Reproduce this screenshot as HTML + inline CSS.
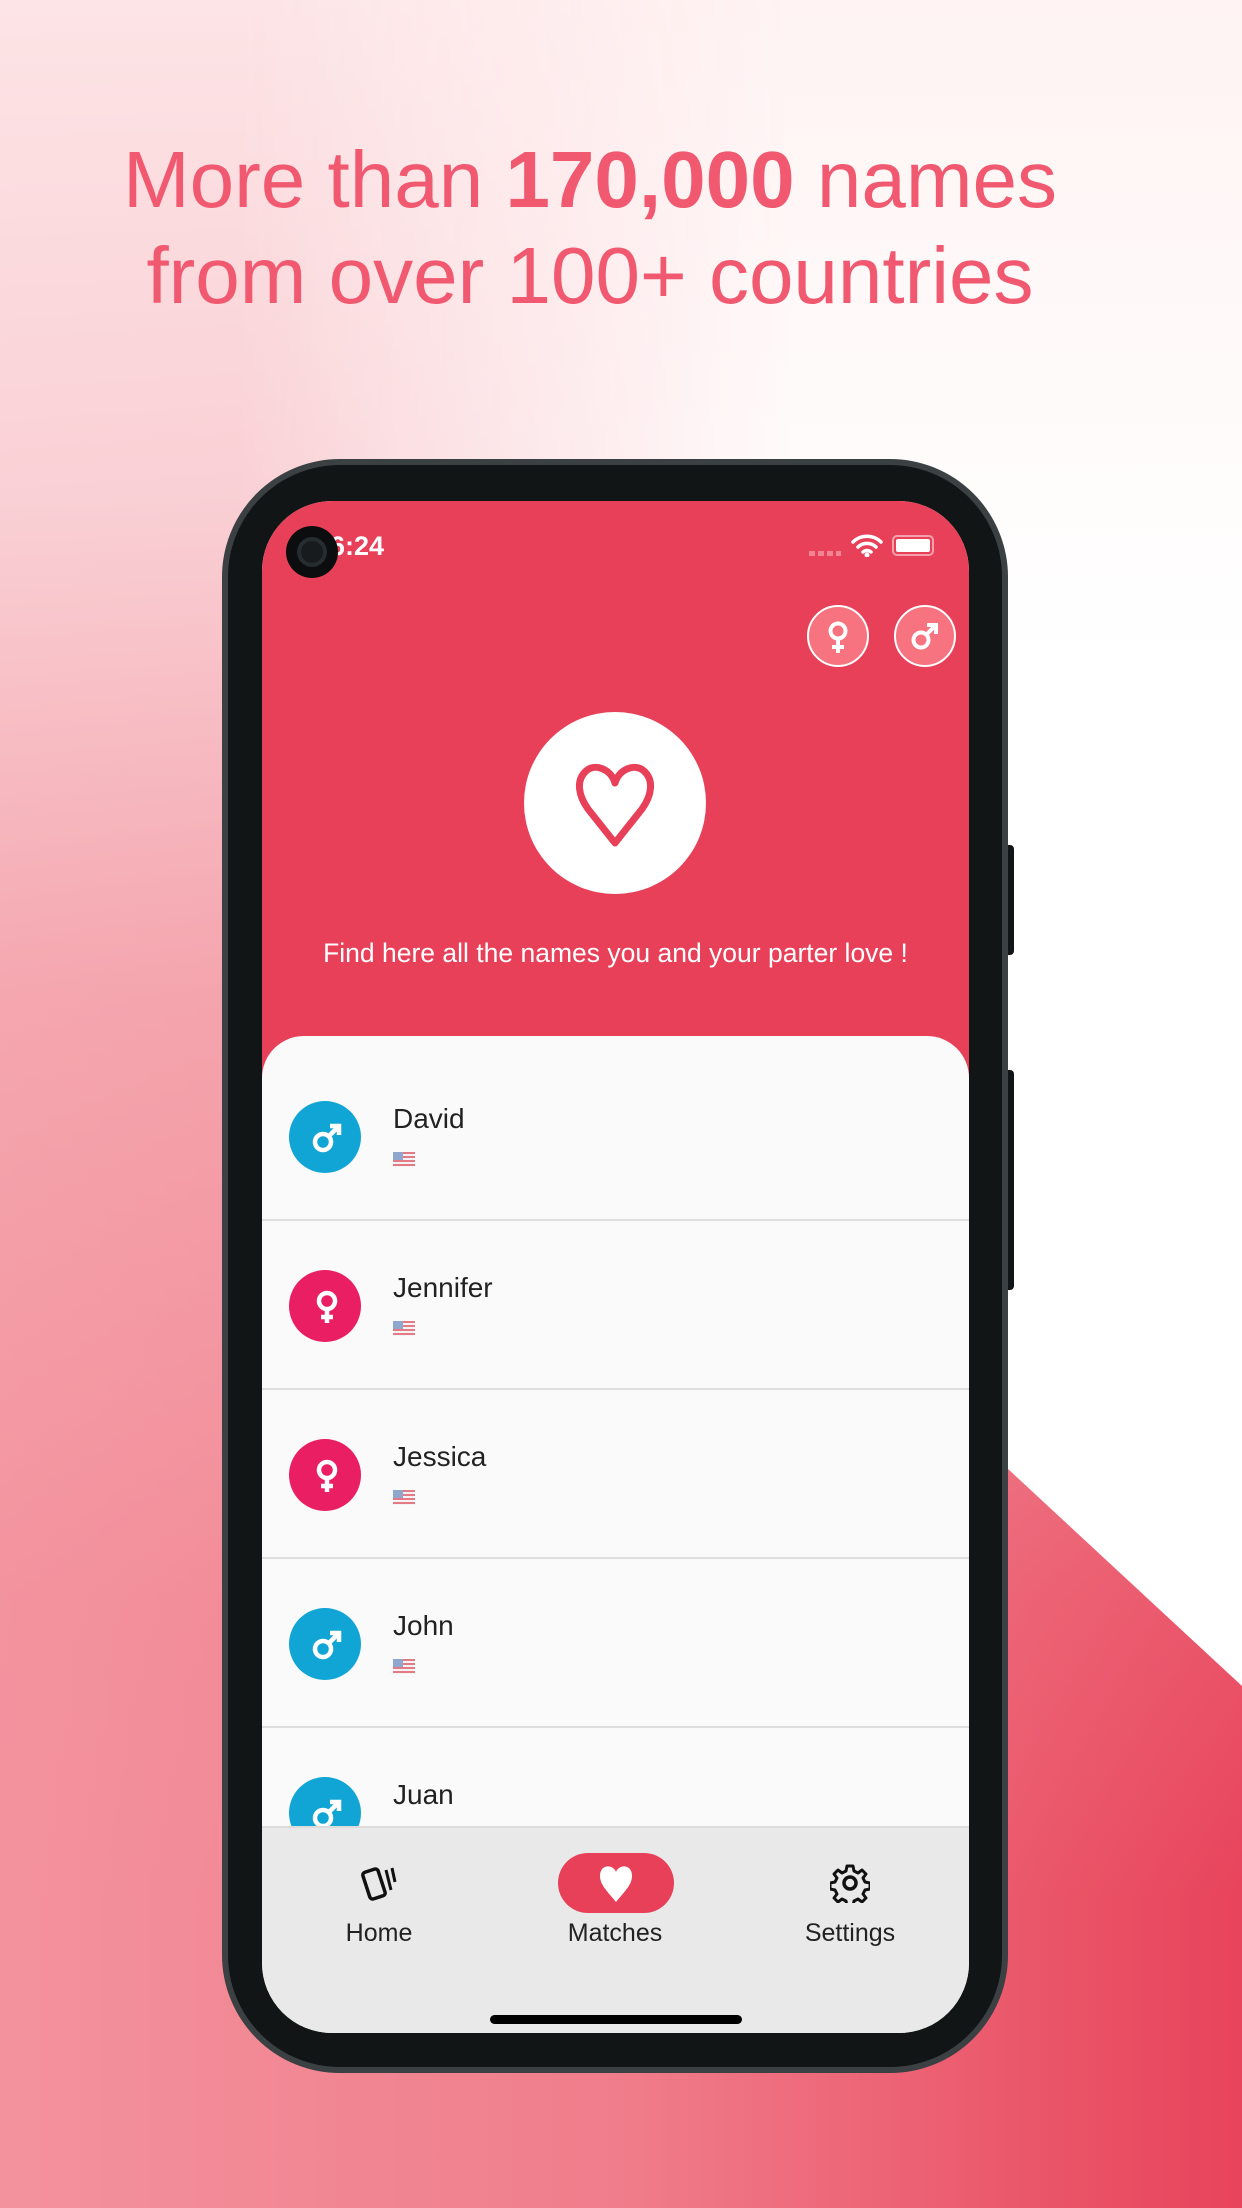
<!DOCTYPE html>
<html><head><meta charset="utf-8"><style>
*{margin:0;padding:0;box-sizing:border-box}
body{width:1242px;height:2208px;overflow:hidden;position:relative;font-family:"Liberation Sans",sans-serif;background:linear-gradient(90deg,#f3929d 0%,#f07d8b 50%,#ea5468 85%,#e8445c 100%)}
.lw{position:absolute;left:0;top:0;width:1242px;height:2208px;background:linear-gradient(180deg,#fde4e6 0px,rgba(250,215,219,.9) 500px,rgba(246,180,187,.6) 1000px,rgba(243,150,160,.2) 1600px,rgba(243,146,157,0) 1900px)}
.wa{position:absolute;left:0;top:0;width:1242px;height:2208px;clip-path:polygon(0 0,1242px 0,1242px 1686px,1008px 1469px,0 534px);background:linear-gradient(180deg,#fff3f3 0%,#fff 30%,#fff 100%);-webkit-mask-image:linear-gradient(90deg,transparent 0px,transparent 232px,rgba(0,0,0,.35) 400px,#000 800px);mask-image:linear-gradient(90deg,transparent 0px,transparent 232px,rgba(0,0,0,.35) 400px,#000 800px)}
h1{position:absolute;left:0;width:1180px;text-align:center;font-weight:normal;font-size:80px;color:#f0596f;line-height:96px;top:132px}
h1 b{font-weight:bold}
.phone{position:absolute;left:222px;top:459px;width:786px;height:1614px;border-radius:118px;background:#121516;border:6px solid #3b4043}
.btn{position:absolute;background:#121516;border-radius:0 4px 4px 0;width:8px;left:1006px}
.screen{position:absolute;left:262px;top:501px;width:707px;height:1532px;border-radius:70px;overflow:hidden;background:#fafafa}
.hdr{position:absolute;left:0;top:0;width:707px;height:580px;background:#e84058}
.sheet{position:absolute;left:0;top:535px;width:707px;height:800px;background:#fafafa;border-radius:42px 42px 0 0}
.row{position:absolute;left:0;width:707px;height:169px;border-bottom:2px solid #dedede}
.av{position:absolute;left:27px;width:72px;height:72px;border-radius:50%}
.nm{position:absolute;left:131px;font-size:28px;color:#222}
.fl{position:absolute;left:131px;width:22px;height:15px;background:repeating-linear-gradient(180deg,#e47a86 0 2px,#f3f3f3 2px 4px)}
.fl:before{content:"";position:absolute;left:0;top:0;width:10px;height:8px;background:#8fa6cf}
.nav{position:absolute;left:0;top:1325px;width:707px;height:207px;background:#e9e9e9;border-top:2px solid #dcdcdc}
.lbl{position:absolute;top:91px;font-size:25px;color:#222;width:200px;text-align:center}
</style></head><body>
<div class="lw"></div>
<div class="wa"></div>
<h1>More than <b>170,000</b> names<br>from over 100+ countries</h1>
<div class="btn" style="top:845px;height:110px"></div>
<div class="btn" style="top:1070px;height:220px"></div>
<div class="phone"></div>
<div class="screen">
 <div class="hdr">
  <div style="position:absolute;left:68px;top:30px;color:#fff;font-size:27px;font-weight:bold">6:24</div>
  <div style="position:absolute;left:547px;top:50px;width:32px;height:5px;background:repeating-linear-gradient(90deg,#f18593 0 6px,transparent 6px 9px)"></div>
  <svg style="position:absolute;left:589px;top:32px" width="32" height="24" viewBox="0 0 32 24"><path d="M2 9a20 20 0 0 1 28 0M7 14a13 13 0 0 1 18 0M12 19a6 6 0 0 1 8 0" stroke="#fff" stroke-width="3.5" fill="none" stroke-linecap="round"/><circle cx="16" cy="22" r="2.5" fill="#fff"/></svg>
  <div style="position:absolute;left:630px;top:34px;width:42px;height:21px;border:2px solid #f5a0aa;border-radius:5px;padding:2px"><div style="width:100%;height:100%;background:#fff;border-radius:2px"></div></div>
  <div style="position:absolute;left:545px;top:104px;width:62px;height:62px;border-radius:50%;background:#f7737f;border:2px solid #fff"></div>
  <svg style="position:absolute;left:560px;top:118px" width="32" height="36" viewBox="0 0 32 36"><circle cx="16" cy="12" r="7.5" stroke="#fff" stroke-width="4" fill="none"/><path d="M16 20v14M10 28h12" stroke="#fff" stroke-width="4"/></svg>
  <div style="position:absolute;left:632px;top:104px;width:62px;height:62px;border-radius:50%;background:#f7737f;border:2px solid #fff"></div>
  <svg style="position:absolute;left:646px;top:118px" width="34" height="34" viewBox="0 0 34 34"><circle cx="13" cy="21" r="7.5" stroke="#fff" stroke-width="4" fill="none"/><path d="M18.5 15.5L28 6M19 6h9v9" stroke="#fff" stroke-width="4" fill="none"/></svg>
  <div style="position:absolute;left:262px;top:211px;width:182px;height:182px;border-radius:50%;background:#fff"></div>
  <svg style="position:absolute;left:303px;top:254px" width="100" height="96" viewBox="0 0 100 96"><path d="M50 28C46 14 30 8 21 16c-10 9-8 24 2 38l27 34 27-34c10-14 12-29 2-38-9-8-25-2-29 12z" stroke="#e84058" stroke-width="7" fill="none" stroke-linejoin="round"/></svg>
  <div style="position:absolute;left:0;width:707px;text-align:center;top:437px;color:#fff;font-size:26.5px">Find here all the names you and your parter love !</div>
 </div>
 <div style="position:absolute;left:24px;top:25px;width:52px;height:52px;border-radius:50%;background:#0b0d0e"></div>
 <div style="position:absolute;left:35px;top:36px;width:30px;height:30px;border-radius:50%;background:#181b1d;border:4px solid #272c2f"></div>
 <div class="sheet">
  <div class="row" style="top:0;height:185px"><div class="av" style="top:65px;background:#10a5d5"></div><div class="nm" style="top:67px">David</div><div class="fl" style="top:116px"></div></div>
  <div class="row" style="top:185px"><div class="av" style="top:49px;background:#e91e63"></div><div class="nm" style="top:51px">Jennifer</div><div class="fl" style="top:100px"></div></div>
  <div class="row" style="top:354px"><div class="av" style="top:49px;background:#e91e63"></div><div class="nm" style="top:51px">Jessica</div><div class="fl" style="top:100px"></div></div>
  <div class="row" style="top:523px"><div class="av" style="top:49px;background:#10a5d5"></div><div class="nm" style="top:51px">John</div><div class="fl" style="top:100px"></div></div>
  <div class="row" style="top:692px"><div class="av" style="top:49px;background:#10a5d5"></div><div class="nm" style="top:51px">Juan</div></div>
 </div>
 <svg style="position:absolute;left:0;top:0" width="707" height="1400">
  <defs><g id="m"><circle cx="-4" cy="5" r="8" stroke="#fff" stroke-width="4.5" fill="none"/><path d="M2 -1L11 -10M3 -11h9v9" stroke="#fff" stroke-width="4.5" fill="none"/></g>
  <g id="f"><circle cx="0" cy="-5" r="8" stroke="#fff" stroke-width="4.5" fill="none"/><path d="M0 3v14M-6 11h12" stroke="#fff" stroke-width="4.5"/></g></defs>
  <use href="#m" x="65" y="636"/><use href="#f" x="65" y="805"/><use href="#f" x="65" y="974"/><use href="#m" x="65" y="1143"/><use href="#m" x="65" y="1312"/>
 </svg>
 <div class="nav">
  <svg style="position:absolute;left:98px;top:36px" width="42" height="42" viewBox="0 0 42 42"><rect x="6" y="6" width="16" height="28" rx="3" transform="rotate(-18 14 20)" stroke="#111" stroke-width="3.5" fill="none"/><path d="M26 6l5 20M32 4l3 14" stroke="#111" stroke-width="3" fill="none"/></svg>
  <div class="lbl" style="left:17px">Home</div>
  <div style="position:absolute;left:296px;top:25px;width:116px;height:60px;border-radius:30px;background:#e84058"></div>
  <svg style="position:absolute;left:336px;top:36px" width="36" height="38" viewBox="0 0 36 38"><path d="M18 8C15 0 2 0 2 12c0 9 8 16 16 26 8-10 16-17 16-26C34 0 21 0 18 8z" fill="#fff"/></svg>
  <div class="lbl" style="left:253px">Matches</div>
  <svg style="position:absolute;left:568px;top:35px" width="40" height="40" viewBox="0 0 40 40"><circle cx="20" cy="20" r="6" stroke="#111" stroke-width="3.5" fill="none"/><path d="M17 3h6l1 5 4 2 4-3 4 4-3 4 2 4 5 1v6l-5 1-2 4 3 4-4 4-4-3-4 2-1 5h-6l-1-5-4-2-4 3-4-4 3-4-2-4-5-1v-6l5-1 2-4-3-4 4-4 4 3 4-2z" stroke="#111" stroke-width="3" fill="none" stroke-linejoin="round"/></svg>
  <div class="lbl" style="left:488px">Settings</div>
  <div style="position:absolute;left:228px;top:187px;width:252px;height:9px;border-radius:5px;background:#000"></div>
 </div>
</div>
</body></html>
